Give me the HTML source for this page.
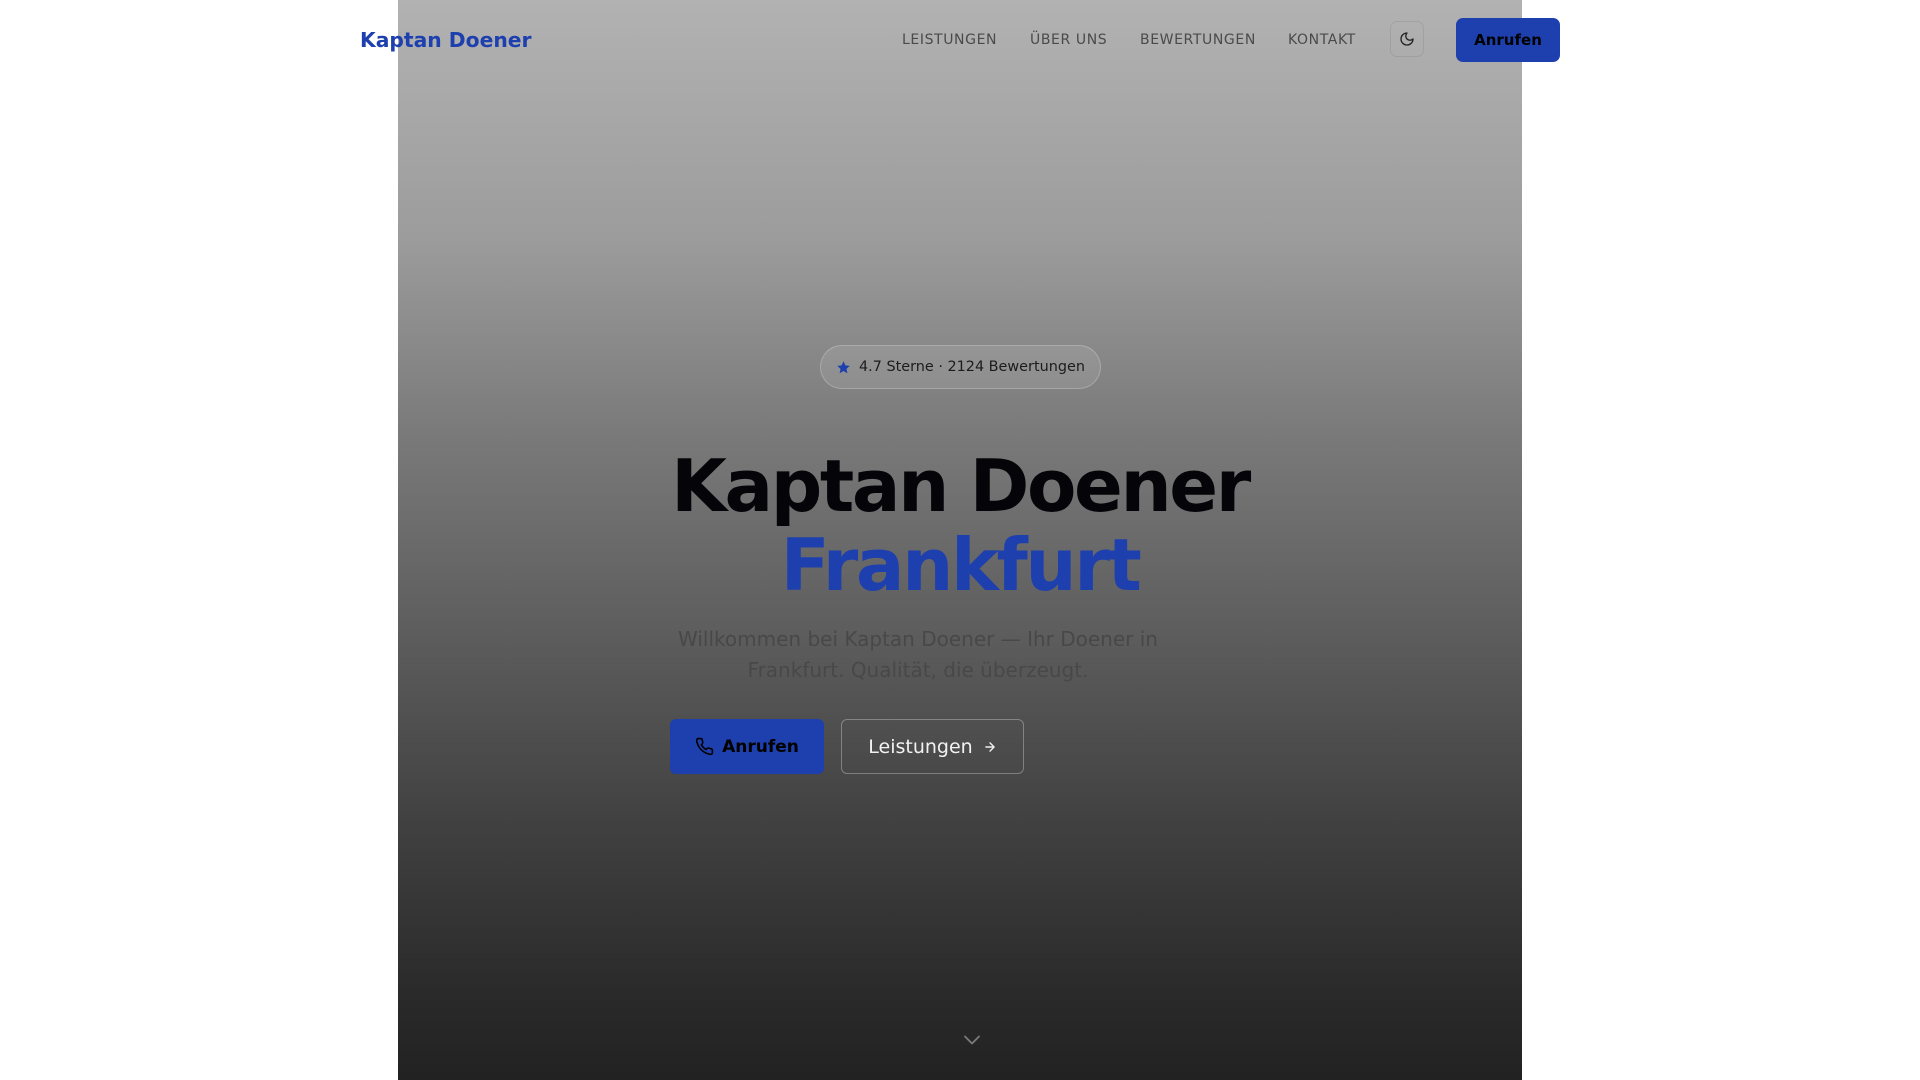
<!DOCTYPE html>
<html><head><meta charset="utf-8"><style>
*{box-sizing:border-box;margin:0;padding:0}
html,body{width:1920px;height:1080px;overflow:hidden;background:#fff;font-family:"DejaVu Sans","Liberation Sans",sans-serif}
.panel{position:absolute;left:398px;top:0;width:1124px;height:1080px;background:linear-gradient(180deg,#b1b2b1 0%,#9c9c9c 22%,#7a7a7a 40%,#5e5e5e 58%,#414141 76%,#2a2a2a 92%,#222 100%)}
.nav{position:absolute;left:360px;top:0;width:1200px;height:80px}
.logo{position:absolute;left:0;top:26px;font-size:20.3px;font-weight:bold;color:#1e40af;line-height:28px}
.links a{position:absolute;top:31px;font-size:14px;letter-spacing:0.6px;color:#4a4a4a;text-decoration:none;line-height:18px}
.theme{position:absolute;left:1030px;top:21px;width:34px;height:36px;border:1px solid rgba(0,0,0,0.08);border-radius:7px;display:flex;align-items:center;justify-content:center}
.call{position:absolute;left:1096px;top:18px;width:104px;height:44px;background:#1e40af;border-radius:7px;color:#000;font-weight:bold;font-size:15px;display:flex;align-items:center;justify-content:center}
.badge{position:absolute;left:820px;top:345px;width:281px;height:44px;border-radius:22px;background:rgba(255,255,255,0.1);border:1px solid rgba(255,255,255,0.22);display:flex;align-items:center;justify-content:center;gap:8px;font-size:14.4px;color:#1c1c1c}
h1{position:absolute;left:560px;top:447px;width:800px;text-align:center;font-size:72px;line-height:79px;font-weight:bold;letter-spacing:-2.4px;color:#050509}
h1 span{color:#1e40af}
.sub{position:absolute;left:662px;top:624px;width:512px;text-align:center;font-size:20px;line-height:31px;color:#484848}
.b1{position:absolute;left:670px;top:719px;width:154px;height:55px;background:#1e40af;border-radius:6px;display:flex;align-items:center;justify-content:center;gap:8px;font-size:17px;font-weight:bold;color:#000}
.b2{position:absolute;left:841px;top:719px;width:183px;height:55px;border:1px solid rgba(255,255,255,0.3);border-radius:6px;display:flex;align-items:center;justify-content:center;gap:10px;font-size:19px;color:#f2f2f2}
.chev{position:absolute;left:958px;top:1026px}
</style></head><body>
<div class="panel"></div>
<div class="nav">
<div class="logo">Kaptan Doener</div>
<div class="links">
<a style="left:542px">LEISTUNGEN</a>
<a style="left:670px">ÜBER UNS</a>
<a style="left:780px">BEWERTUNGEN</a>
<a style="left:928px">KONTAKT</a>
</div>
<div class="theme"><svg width="16" height="16" viewBox="0 0 24 24" fill="none" stroke="#222" stroke-width="2" stroke-linecap="round" stroke-linejoin="round"><path d="M12 3a6 6 0 0 0 9 9 9 9 0 1 1-9-9Z"/></svg></div>
<div class="call">Anrufen</div>
</div>
<div class="badge"><svg width="15" height="15" viewBox="0 0 24 24" fill="#1e40af"><path d="M12 2l3 6.5 7 .8-5.2 4.8 1.4 7L12 17.6 5.8 21.1l1.4-7L2 9.3l7-.8z"/></svg><span>4.7 Sterne · 2124 Bewertungen</span></div>
<h1>Kaptan Doener<br><span>Frankfurt</span></h1>
<div class="sub">Willkommen bei Kaptan Doener — Ihr Doener in Frankfurt. Qualität, die überzeugt.</div>
<div class="b1"><svg width="19" height="19" viewBox="0 0 24 24" fill="none" stroke="#000" stroke-width="2" stroke-linecap="round" stroke-linejoin="round"><path d="M22 16.9v3a2 2 0 0 1-2.2 2 19.8 19.8 0 0 1-8.6-3.1 19.5 19.5 0 0 1-6-6A19.8 19.8 0 0 1 2.1 4.2 2 2 0 0 1 4.1 2h3a2 2 0 0 1 2 1.7c.1.9.4 1.8.7 2.7a2 2 0 0 1-.5 2.1L8 9.8a16 16 0 0 0 6 6l1.3-1.3a2 2 0 0 1 2.1-.4c.9.3 1.8.6 2.7.7a2 2 0 0 1 1.7 2Z"/></svg>Anrufen</div>
<div class="b2">Leistungen<svg width="14" height="14" viewBox="0 0 24 24" fill="none" stroke="#eee" stroke-width="2.4" stroke-linecap="round" stroke-linejoin="round"><path d="M5 12h14M12 5l7 7-7 7"/></svg></div>
<svg class="chev" width="28" height="28" viewBox="0 0 24 24" fill="none" stroke="#7a7a7a" stroke-width="1.6" stroke-linecap="round" stroke-linejoin="round"><path d="M6 9l6 6 6-6"/></svg>
</body></html>
